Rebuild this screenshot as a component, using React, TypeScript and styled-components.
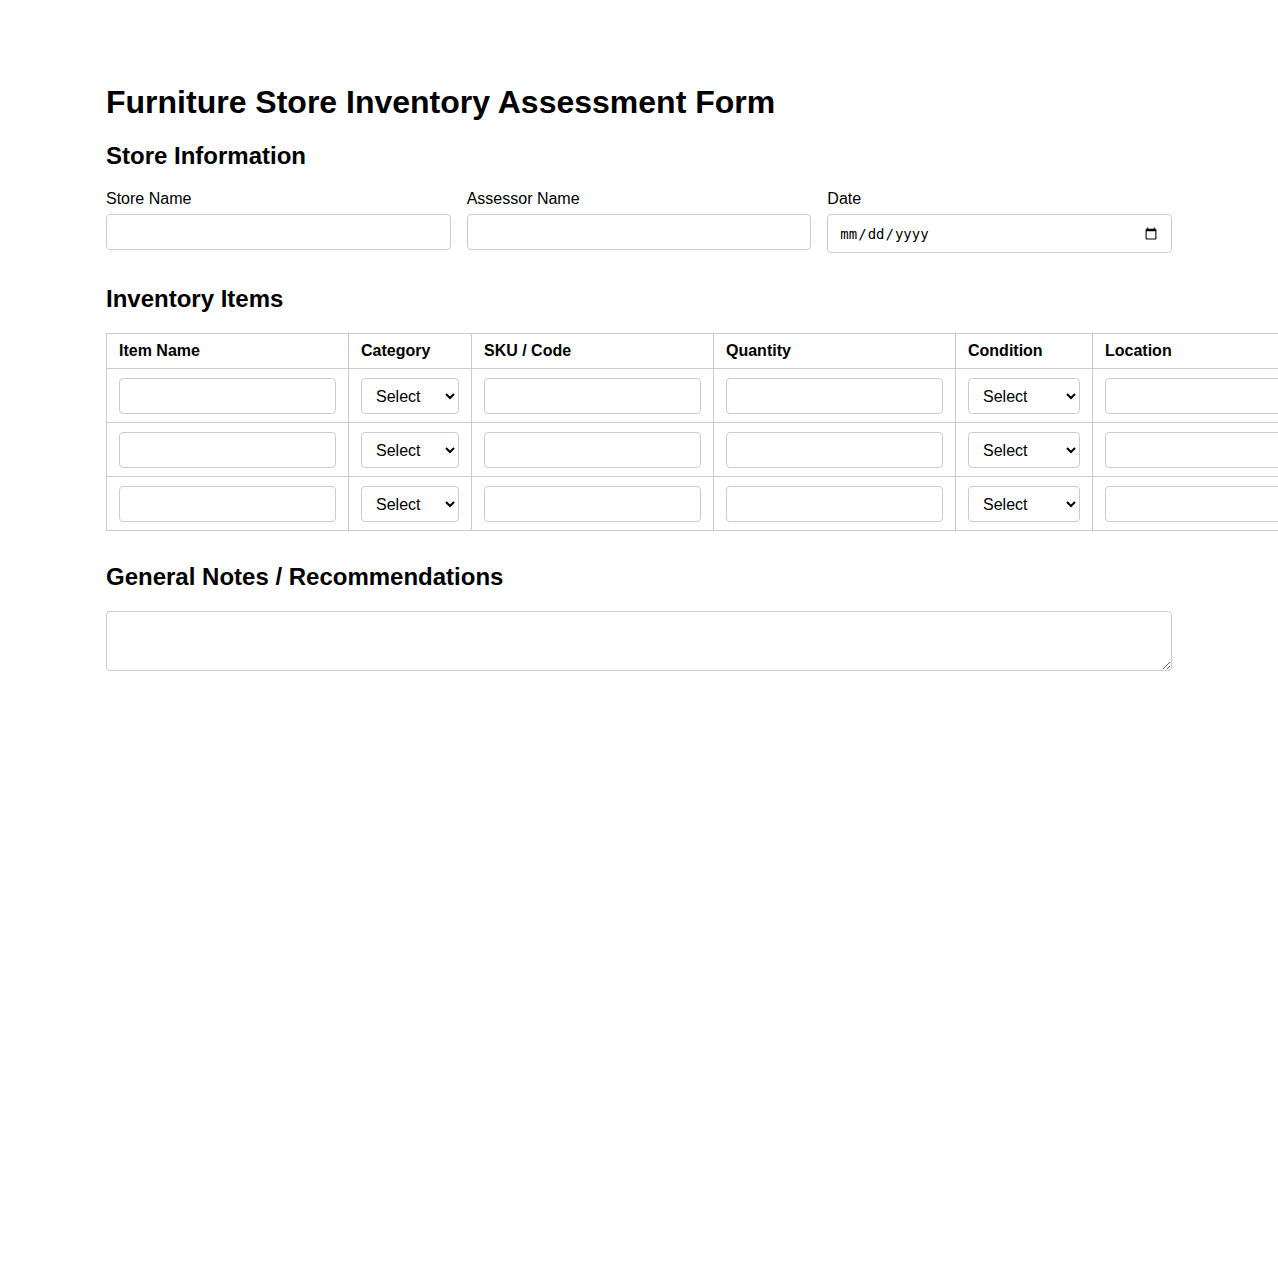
import styled, { createGlobalStyle } from "styled-components";

const GlobalStyle = createGlobalStyle`
    html, body {
        margin: 0;
        padding: 0;
        background: #fff;
        overflow-x: hidden;
    }
    body {
        font-family: "Liberation Sans", Arial, sans-serif;
        color: #000;
    }
`

const Page = styled.div`
    max-width: 1066px;
    margin: 0 auto;
    padding-top: 63px;
`

const Title = styled.h1`
    font-size: 32px;
    font-weight: 700;
    margin: 21px 0 21px;
    line-height: 37px;
`

const SectionTitle = styled.h2`
    font-size: 24px;
    font-weight: 700;
    margin: 0 0 20px;
    line-height: 28px;
`

const Section = styled.section`
    margin-bottom: 32px;
`

const FieldRow = styled.div`
    display: grid;
    grid-template-columns: repeat(3, 1fr);
    gap: 16px;
    align-items: start;
`

const Field = styled.div`
    display: flex;
    flex-direction: column;
`

const Label = styled.label`
    font-size: 16px;
    line-height: 18px;
    margin-bottom: 6px;
`

const TextInput = styled.input<{ $width?: string }>`
    box-sizing: border-box;
    display: block;
    width: ${ p => p.$width || '100%' };
    height: 36px;
    padding: 8px;
    font-family: "Liberation Sans", Arial, sans-serif;
    font-size: 16px;
    border: 1px solid #ccc;
    border-radius: 4px;
    background: #fff;
`

const DateInput = styled.input`
    box-sizing: border-box;
    display: block;
    width: 100%;
    height: 39px;
    padding: 8px 11px 8px 11px;
    font-size: 14px;
    border: 1px solid #ccc;
    border-radius: 4px;
    background: #fff;
`

const Select = styled.select<{ $width: string }>`
    box-sizing: border-box;
    display: block;
    width: ${ p => p.$width };
    height: 36px;
    padding: 8px 4px 8px 10px;
    font-family: "Liberation Sans", Arial, sans-serif;
    font-size: 16px;
    color: #000;
    border: 1px solid #ccc;
    border-radius: 4px;
    background: #fff;
`

const Table = styled.table`
    border-collapse: collapse;
    width: max-content;
`

const HeadCell = styled.th`
    text-align: left;
    font-size: 16px;
    font-weight: 700;
    line-height: 18px;
    padding: 8px 12px;
    border: 1px solid #ccc;
`

const Cell = styled.td`
    padding: 9px 12px 8px;
    border: 1px solid #ccc;
    vertical-align: top;
`

const Notes = styled.textarea`
    box-sizing: border-box;
    display: block;
    width: 100%;
    height: 60px;
    padding: 8px;
    font-family: "Liberation Sans", Arial, sans-serif;
    font-size: 16px;
    border: 1px solid #ccc;
    border-radius: 4px;
`

const categories = ['Seating', 'Tables', 'Beds', 'Storage', 'Decor']
const conditions = ['New', 'Good', 'Fair', 'Damaged']

const ItemRow = () => {
    return <tr>
        <Cell><TextInput type="text" $width="217px" /></Cell>
        <Cell>
            <Select $width="98px" defaultValue="">
                <option value="">Select</option>
                { categories.map(c => <option key={ c }>{ c }</option>) }
            </Select>
        </Cell>
        <Cell><TextInput type="text" $width="217px" /></Cell>
        <Cell><TextInput type="number" $width="217px" /></Cell>
        <Cell>
            <Select $width="112px" defaultValue="">
                <option value="">Select</option>
                { conditions.map(c => <option key={ c }>{ c }</option>) }
            </Select>
        </Cell>
        <Cell><TextInput type="text" $width="217px" /></Cell>
    </tr>
}

const App = () => {
    return <>
        <GlobalStyle />
        <Page>
            <Title>Furniture Store Inventory Assessment Form</Title>

            <Section>
                <SectionTitle>Store Information</SectionTitle>
                <FieldRow>
                    <Field>
                        <Label>Store Name</Label>
                        <TextInput type="text" />
                    </Field>
                    <Field>
                        <Label>Assessor Name</Label>
                        <TextInput type="text" />
                    </Field>
                    <Field>
                        <Label>Date</Label>
                        <DateInput type="date" />
                    </Field>
                </FieldRow>
            </Section>

            <Section>
                <SectionTitle>Inventory Items</SectionTitle>
                <Table>
                    <thead>
                        <tr>
                            <HeadCell>Item Name</HeadCell>
                            <HeadCell>Category</HeadCell>
                            <HeadCell>SKU / Code</HeadCell>
                            <HeadCell>Quantity</HeadCell>
                            <HeadCell>Condition</HeadCell>
                            <HeadCell>Location</HeadCell>
                        </tr>
                    </thead>
                    <tbody>
                        <ItemRow />
                        <ItemRow />
                        <ItemRow />
                    </tbody>
                </Table>
            </Section>

            <Section>
                <SectionTitle>General Notes / Recommendations</SectionTitle>
                <Notes />
            </Section>
        </Page>
    </>
}

export default App
